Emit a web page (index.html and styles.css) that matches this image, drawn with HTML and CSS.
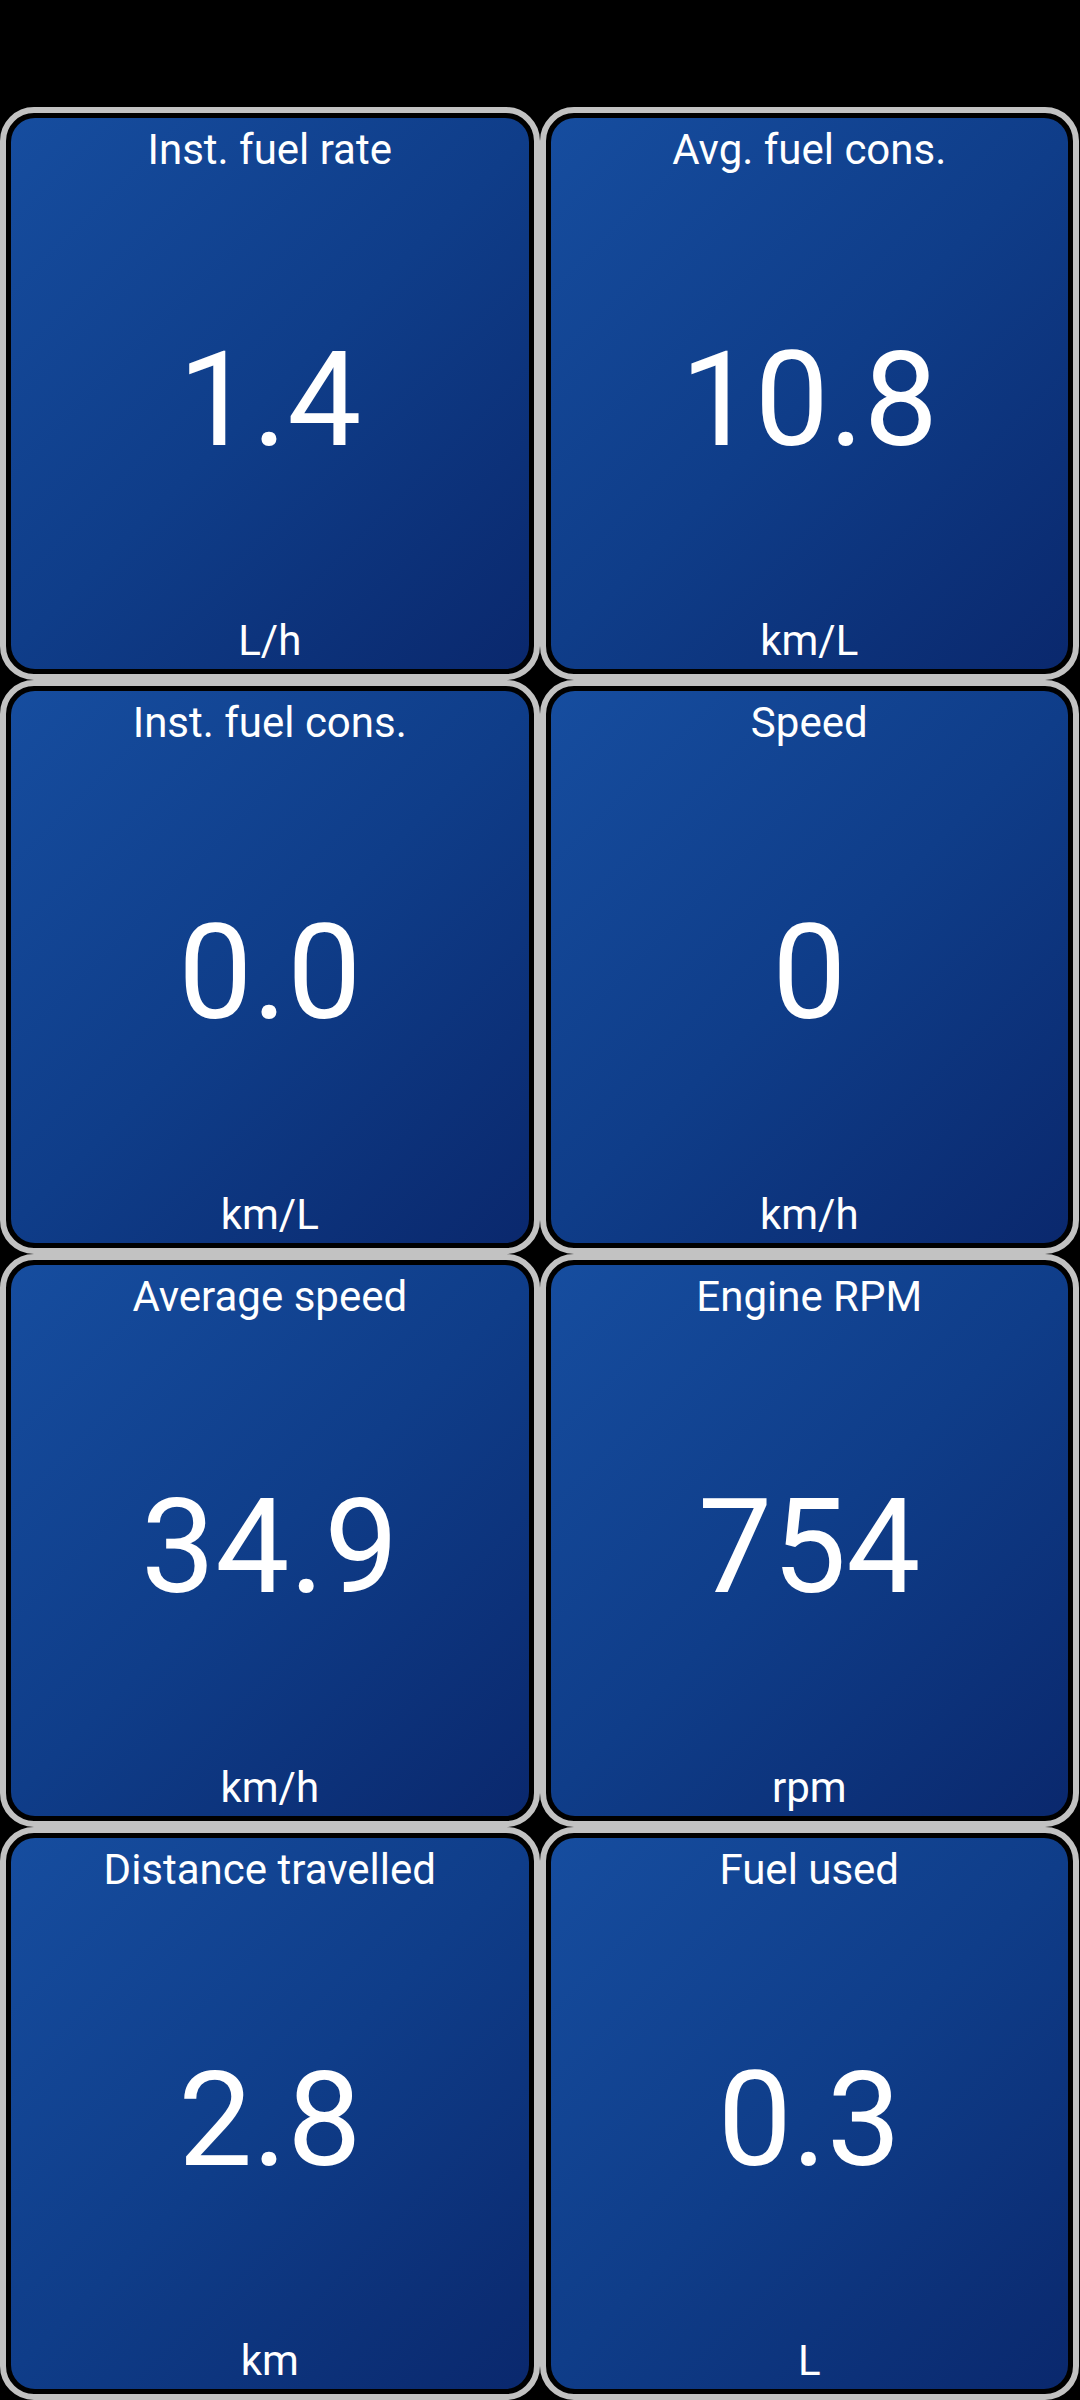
FILE: index.html
```html
<!DOCTYPE html>
<html>
<head>
<meta charset="utf-8">
<link rel="stylesheet" href="styles.css">
</head>
<body>
<div class="grid">
  <div class="card"><div class="face"><div class="title">Inst. fuel rate</div><div class="value">1.4</div><div class="unit">L/h</div></div></div>
  <div class="card"><div class="face"><div class="title">Avg. fuel cons.</div><div class="value">10.8</div><div class="unit">km/L</div></div></div>
  <div class="card"><div class="face"><div class="title">Inst. fuel cons.</div><div class="value">0.0</div><div class="unit">km/L</div></div></div>
  <div class="card"><div class="face"><div class="title">Speed</div><div class="value">0</div><div class="unit">km/h</div></div></div>
  <div class="card"><div class="face"><div class="title">Average speed</div><div class="value">34.9</div><div class="unit">km/h</div></div></div>
  <div class="card"><div class="face"><div class="title">Engine RPM</div><div class="value">754</div><div class="unit">rpm</div></div></div>
  <div class="card"><div class="face"><div class="title">Distance travelled</div><div class="value">2.8</div><div class="unit">km</div></div></div>
  <div class="card"><div class="face"><div class="title">Fuel used</div><div class="value">0.3</div><div class="unit">L</div></div></div>
</div>
</body>
</html>
```
FILE: styles.css
```css
html, body {
  margin: 0;
  padding: 0;
  background: #000;
}
body {
  width: 1080px;
  height: 2400px;
  overflow: hidden;
  font-family: Roboto, "Noto Sans", sans-serif;
  color: #fff;
}
.grid {
  box-sizing: border-box;
  height: 2400px;
  padding: 107px 1px 0 0;
  display: grid;
  grid-template-columns: 1fr 1fr;
  grid-template-rows: repeat(4, 1fr);
}
.card {
  box-sizing: border-box;
  border: 6px solid #c2c2c2;
  border-radius: 34px;
  padding: 5px;
  display: flex;
  min-height: 0;
}
.face {
  flex: 1;
  border-radius: 24px;
  background: linear-gradient(135deg, #164d9f 0%, #0f3d89 50%, #0a286d 100%);
  display: flex;
  flex-direction: column;
  align-items: center;
  padding: 7px 0 4px;
}
.title, .unit {
  font-size: 42px;
  line-height: 49px;
  white-space: nowrap;
}
.value {
  flex: 1;
  display: flex;
  align-items: center;
  justify-content: center;
  font-size: 132px;
  padding-top: 10px;
}
```
